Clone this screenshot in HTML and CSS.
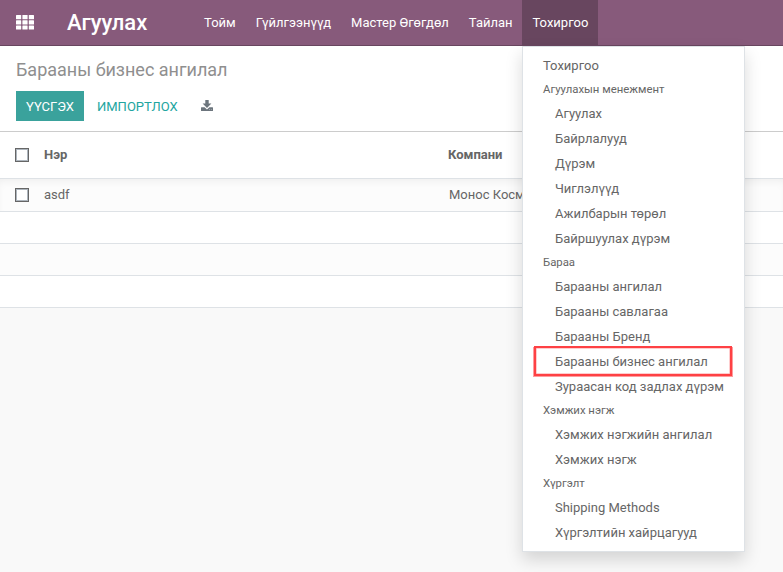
FILE: index.html
```html
<!DOCTYPE html>
<html lang="mn">
<head>
<meta charset="utf-8">
<title>Агуулах</title>
<link rel="stylesheet" href="styles.css">
</head>
<body>
<header class="navbar">
  <svg class="apps" width="18" height="15" viewBox="0 0 18 15" fill="#fff">
    <rect x="0" y="0" width="5.2" height="4.2" rx=".5"/><rect x="6.4" y="0" width="5.2" height="4.2" rx=".5"/><rect x="12.8" y="0" width="5.2" height="4.2" rx=".5"/>
    <rect x="0" y="5.2" width="5.2" height="4.2" rx=".5"/><rect x="6.4" y="5.2" width="5.2" height="4.2" rx=".5"/><rect x="12.8" y="5.2" width="5.2" height="4.2" rx=".5"/>
    <rect x="0" y="10.4" width="5.2" height="4.2" rx=".5"/><rect x="6.4" y="10.4" width="5.2" height="4.2" rx=".5"/><rect x="12.8" y="10.4" width="5.2" height="4.2" rx=".5"/>
  </svg>
  <a class="brand">Агуулах</a>
  <nav class="menu">
    <a>Тойм</a>
    <a>Гүйлгээнүүд</a>
    <a>Мастер Өгөгдөл</a>
    <a>Тайлан</a>
    <div class="open">
      <a class="active">Тохиргоо</a>
      <div class="dropdown">
        <a>Тохиргоо</a>
        <h6>Агуулахын менежмент</h6>
        <a class="sub">Агуулах</a>
        <a class="sub">Байрлалууд</a>
        <a class="sub">Дүрэм</a>
        <a class="sub">Чиглэлүүд</a>
        <a class="sub">Ажилбарын төрөл</a>
        <a class="sub">Байршуулах дүрэм</a>
        <h6>Бараа</h6>
        <a class="sub">Барааны ангилал</a>
        <a class="sub">Барааны савлагаа</a>
        <a class="sub">Барааны Бренд</a>
        <a class="sub marked">Барааны бизнес ангилал</a>
        <a class="sub">Зураасан код задлах дүрэм</a>
        <h6>Хэмжих нэгж</h6>
        <a class="sub">Хэмжих нэгжийн ангилал</a>
        <a class="sub">Хэмжих нэгж</a>
        <h6>Хүргэлт</h6>
        <a class="sub">Shipping Methods</a>
        <a class="sub">Хүргэлтийн хайрцагууд</a>
      </div>
    </div>
  </nav>
</header>
<section class="panel">
  <h1>Барааны бизнес ангилал</h1>
  <div class="buttons">
    <button class="primary">ҮҮСГЭХ</button>
    <button class="secondary">ИМПОРТЛОХ</button>
    <svg class="download" width="12" height="12" viewBox="0 0 12 12" fill="#6c757d">
      <path d="M4.300 0h3.400v3.600h2.700L6 8 1.600 3.600h2.700z"/>
      <path d="M.5 7.200h3.100L6 9.400l2.400-2.200H11.500q.5 0 .5.500v2.800q0 .5-.5.500H.5q-.5 0-.5-.5V7.700q0-.5.5-.5z"/>
      <path d="M8 9.400h.7v.7H8zM9.900 9.400h.7v.7h-.7z" fill="#fff"/>
    </svg>
  </div>
</section>
<main class="list">
  <div class="row head"><span class="check"></span><span class="name">Нэр</span><span>Компани</span></div>
  <div class="row first"><span class="check"></span><span class="name">asdf</span><span class="company">Монос Косметик</span></div>
  <div class="row"></div>
  <div class="row striped"></div>
  <div class="row"></div>
</main>
</body>
</html>
```
FILE: styles.css
```css
*, *::after { box-sizing: border-box; }
body {
  margin: 0;
  height: 572px;
  overflow: hidden;
  background: #f9f9f9;
  color: #666;
  font: 13px/19.5px Roboto, sans-serif;
}
.navbar {
  display: flex;
  height: 46px;
  background: #875a7b;
  border-bottom: 1px solid #68465f;
  color: #fff;
}
.apps { margin: 15px 0 0 16px; flex: none; }
.brand { margin-left: 33px; width: 127px; flex: none; font-size: 22px; font-weight: 500; line-height: 45px; }
.menu { display: flex; line-height: 45px; white-space: nowrap; }
.menu > a, .active { display: block; padding: 0 10px; }
.open { position: relative; margin-left: -.6px; }
.menu .active { padding: 0 10px 0 10.500px; background: #68465f; }
.dropdown {
  position: absolute;
  top: 46px;
  left: 0;
  z-index: 2;
  width: 223px;
  height: 506px;
  padding: 6px 0;
  background: #fff;
  border: 1px solid #dee2e6;
  box-shadow: 0 8px 16px rgba(0, 0, 0, .15);
  color: #666;
}
.dropdown a { display: block; height: 25px; padding-left: 20px; line-height: 25px; }
.dropdown .sub { padding-left: 32px; }
.dropdown h6 { margin: 0; height: 23px; padding-left: 20px; font-size: 11.375px; font-weight: 400; line-height: 23px; }
.marked { position: relative; }
.marked::after {
  content: "";
  position: absolute;
  left: 11px;
  top: -3px;
  width: 198px;
  height: 30px;
  border: 2px solid #fe4144;
  box-shadow: 1px 1px 0 #fe9c9e, -1px 1px 0 #fe9c9e, inset 0 0 0 .5px #fe9c9e;
}
.panel { height: 86px; padding: 12px 16px 0; background: #fff; border-bottom: 1px solid #ccc; }
h1 { margin: 0; font-size: 18px; font-weight: 400; line-height: 24px; color: #8f8f8f; }
.buttons { display: flex; align-items: center; margin-top: 9px; height: 30px; }
button { height: 30px; padding: 1px 10px 0; border: 0; font: 13px/29px Roboto, sans-serif; }
.primary { background: #3aa29c; color: #fff; }
.secondary { margin-left: 3px; background: none; color: #21a5a0; }
.download { margin-left: 13px; }
.row { display: flex; align-items: center; height: 32px; padding-left: 15px; background: #fff; border-bottom: 1px solid #dee2e6; }
.head { height: 47px; font-weight: 700; }
.first { height: 33px; background: #fcfcfc; box-shadow: inset 0 5px 10px -4px rgba(0, 0, 0, .07); }
.striped { background: #fcfcfc; }
.check { width: 14px; height: 14px; border: 1px solid #666; box-shadow: inset 0 0 0 1px #adb5bd; background: #fff; }
.name { width: 404px; margin-left: 15px; }
.company { padding-left: 1px; }
```
